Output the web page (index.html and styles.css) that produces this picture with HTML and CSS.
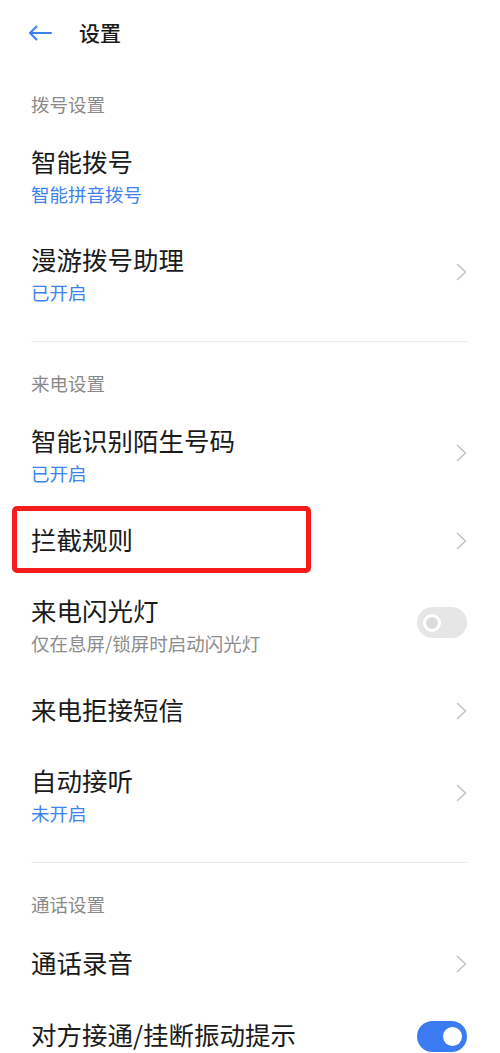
FILE: index.html
```html
<!DOCTYPE html>
<html lang="zh-CN">
<head>
<meta charset="utf-8">
<title>设置</title>
<link rel="stylesheet" href="styles.css">
</head>
<body>
<div class="page">
  <header class="header">
    <svg class="back" width="24" height="16" viewBox="0 0 24 16">
      <path d="M23 8H2M8.5 1.5L2 8l6.5 6.5" fill="none" stroke="#3b7ff0" stroke-width="2" stroke-linecap="round" stroke-linejoin="round"/>
    </svg>
    <h1 class="title">设置</h1>
  </header>

  <section class="group">
    <div class="sec-title">拨号设置</div>
    <div class="row two">
      <div class="text">
        <div class="name">智能拨号</div>
        <div class="sub blue">智能拼音拨号</div>
      </div>
    </div>
    <div class="row two">
      <div class="text">
        <div class="name">漫游拨号助理</div>
        <div class="sub blue">已开启</div>
      </div>
      <svg class="chev" width="11" height="18" viewBox="0 0 11 18"><path d="M1.5 1.5L9.5 9l-8 7.5" fill="none" stroke="#c4c4c4" stroke-width="1.6" stroke-linecap="round" stroke-linejoin="round"/></svg>
    </div>
  </section>
  <div class="divider"></div>

  <section class="group">
    <div class="sec-title">来电设置</div>
    <div class="row two">
      <div class="text">
        <div class="name">智能识别陌生号码</div>
        <div class="sub blue">已开启</div>
      </div>
      <svg class="chev" width="11" height="18" viewBox="0 0 11 18"><path d="M1.5 1.5L9.5 9l-8 7.5" fill="none" stroke="#c4c4c4" stroke-width="1.6" stroke-linecap="round" stroke-linejoin="round"/></svg>
    </div>
    <div class="row one highlight">
      <div class="text">
        <div class="name">拦截规则</div>
      </div>
      <svg class="chev" width="11" height="18" viewBox="0 0 11 18"><path d="M1.5 1.5L9.5 9l-8 7.5" fill="none" stroke="#c4c4c4" stroke-width="1.6" stroke-linecap="round" stroke-linejoin="round"/></svg>
      <div class="mark"></div>
    </div>
    <div class="row two">
      <div class="text">
        <div class="name">来电闪光灯</div>
        <div class="sub gray">仅在息屏/锁屏时启动闪光灯</div>
      </div>
      <div class="toggle off"><span class="knob"></span></div>
    </div>
    <div class="row one">
      <div class="text">
        <div class="name">来电拒接短信</div>
      </div>
      <svg class="chev" width="11" height="18" viewBox="0 0 11 18"><path d="M1.5 1.5L9.5 9l-8 7.5" fill="none" stroke="#c4c4c4" stroke-width="1.6" stroke-linecap="round" stroke-linejoin="round"/></svg>
    </div>
    <div class="row two">
      <div class="text">
        <div class="name">自动接听</div>
        <div class="sub blue">未开启</div>
      </div>
      <svg class="chev" width="11" height="18" viewBox="0 0 11 18"><path d="M1.5 1.5L9.5 9l-8 7.5" fill="none" stroke="#c4c4c4" stroke-width="1.6" stroke-linecap="round" stroke-linejoin="round"/></svg>
    </div>
  </section>
  <div class="divider"></div>

  <section class="group">
    <div class="sec-title">通话设置</div>
    <div class="row one">
      <div class="text">
        <div class="name">通话录音</div>
      </div>
      <svg class="chev" width="11" height="18" viewBox="0 0 11 18"><path d="M1.5 1.5L9.5 9l-8 7.5" fill="none" stroke="#c4c4c4" stroke-width="1.6" stroke-linecap="round" stroke-linejoin="round"/></svg>
    </div>
    <div class="row one">
      <div class="text">
        <div class="name">对方接通/挂断振动提示</div>
      </div>
      <div class="toggle on"><span class="knob"></span></div>
    </div>
  </section>
</div>
</body>
</html>
```

FILE: styles.css
```css
* { box-sizing: border-box; }
html, body {
  margin: 0;
  padding: 0;
  background: #ffffff;
}
body {
  font-family: "Noto Sans CJK SC", "Noto Sans", "Liberation Sans", sans-serif;
  color: #1a1a1a;
  overflow: hidden;
}
.page {
  width: 500px;
  height: 1053px;
  overflow: hidden;
}
.header {
  height: 63px;
  padding: 1px 0 0 28px;
  display: flex;
  align-items: center;
  gap: 27px;
}
.back { display: block; margin-top: 2px; }
.title {
  margin: 0;
  font-size: 21px;
  font-weight: 500;
  line-height: 28px;
  color: #1a1a1a;
}
.sec-title {
  padding: 29px 31px 12px;
  font-size: 18.5px;
  line-height: 24px;
  color: #8a8a8a;
}
.row {
  position: relative;
  display: flex;
  align-items: center;
  justify-content: space-between;
  padding: 0 33px 0 31px;
}
.row.two { height: 98px; }
.row.one { height: 72px; }
.text {
  display: flex;
  flex-direction: column;
  padding-bottom: 4px;
}
.name {
  font-size: 25.5px;
  line-height: 32px;
  color: #1a1a1a;
}
.sub {
  margin-top: 5px;
  font-size: 18.5px;
  line-height: 24px;
}
.sub.blue { color: #3d83ee; }
.sub.gray { color: #8c8c8c; }
.chev { display: block; }
.row.two .chev,
.row.two .toggle { margin-bottom: 7px; }
.divider {
  margin: 17px 33px 0 31px;
  height: 1px;
  background: #ebebeb;
}
.toggle {
  position: relative;
  width: 50px;
  height: 31px;
  border-radius: 16px;
  flex: none;
}
.toggle.off { background: #e6e6e6; }
.toggle.on { background: #3a7bf2; }
.knob {
  position: absolute;
  top: 50%;
  border-radius: 50%;
}
.toggle.off .knob {
  left: 6px;
  width: 18px;
  height: 18px;
  margin-top: -9px;
  background: #dcdcdc;
  border: 3.5px solid #ffffff;
}
.toggle.on .knob {
  left: 26px;
  width: 19px;
  height: 19px;
  margin-top: -9.5px;
  background: #ffffff;
}
.mark {
  position: absolute;
  left: 12px;
  top: 1px;
  width: 299px;
  height: 67px;
  border: 5.5px solid #f51c1c;
  border-radius: 5px;
  pointer-events: none;
}
```
